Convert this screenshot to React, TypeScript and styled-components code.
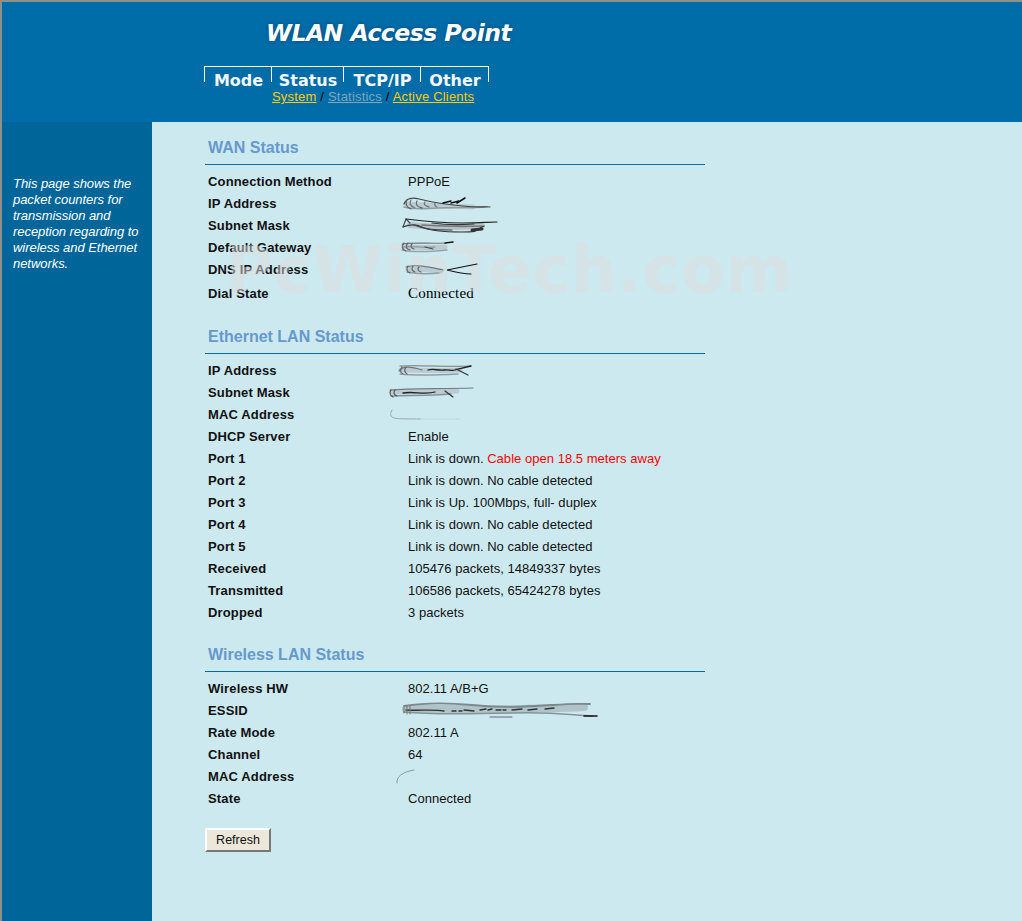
import React from 'react';
import styled, { createGlobalStyle } from 'styled-components';

const GlobalStyle = createGlobalStyle`
    html, body {
        margin: 0;
        padding: 0;
        background: #cce9f0;
    }
    body {
        font-family: "Liberation Sans", Arial, sans-serif;
    }
`;

type Stroke = { d: string; w?: number; c?: string };

// the blurred-out addresses are scribbles in the screenshot, x is offset from the value column
const Smudge = ({ w, h, x, y = 0, strokes }: { w: number; h: number; x: number; y?: number; strokes: Stroke[] }) => (
    <SmudgeSvg width={w} height={h} viewBox={`0 0 ${w} ${h}`} $x={x} $y={y}>
        {strokes.map((s, i) => (
            <path key={i} d={s.d} fill="none" stroke={s.c ?? '#333'} strokeWidth={s.w ?? 1} strokeLinecap="round" />
        ))}
    </SmudgeSvg>
);

const wanIp: Stroke[] = [
    { d: 'M3 8C16 9 40 10 70 11', c: '#b8ccd2', w: 5 },
    { d: 'M1 11C8 13 20 13 35 12S62 12 84 11', c: '#8f9ca0', w: 1.6 },
    { d: 'M1 8C3 3 8 1 16 3S36 8 60 10S78 10 87 11', c: '#444', w: 1.2 },
    { d: 'M4 4C2 7 3 11 8 13', c: '#666', w: 1.3 },
    { d: 'M8 4C6 7 7 10 12 12', c: '#777', w: 1.3 },
    { d: 'M14 5C12 8 14 11 19 12', c: '#666', w: 1.3 },
    { d: 'M22 6C20 8 22 10 26 11', c: '#777', w: 1.3 },
    { d: 'M32 7C31 9 32 10 34 11', c: '#777', w: 1.3 },
    { d: 'M40 7L48 5M48 7L56 5M54 7L62 2', c: '#111', w: 1.5 },
];
const wanMask: Stroke[] = [
    { d: 'M8 7C30 9 56 10 80 8', c: '#b4c6cc', w: 6 },
    { d: 'M20 7C36 8 56 9 80 8', c: '#777', w: 1.6 },
    { d: 'M1 9L4 1L8 5', c: '#444', w: 1.2 },
    { d: 'M4 1C20 3 40 5 60 5S85 4 95 4', c: '#222', w: 1.2 },
    { d: 'M1 9C8 6 14 6 20 9S40 14 60 14S72 12 82 8', c: '#333', w: 1.2 },
    { d: 'M12 7C24 12 34 12 50 12', c: '#444', w: 1.2 },
    { d: 'M70 12L80 11', c: '#333', w: 3 },
    { d: 'M30 5C44 7 58 7 72 6', c: '#333', w: 1.2 },
];
const wanGateway: Stroke[] = [
    { d: 'M3 5C14 5 30 6 44 5', c: '#b8ccd2', w: 5 },
    { d: 'M1 8C10 10 26 10 46 8', c: '#98a4a8', w: 1.5 },
    { d: 'M1 2C14 0 30 2 44 1', c: '#777', w: 1.2 },
    { d: 'M2 5C12 4 26 6 34 5', c: '#888' },
    { d: 'M44 1L52 0', c: '#111', w: 1.5 },
    { d: 'M3 1C0 4 1 8 5 9M7 1C4 4 5 7 9 8M11 2C9 4 10 6 13 7', c: '#666', w: 1.2 },
    { d: 'M24 5L32 7', c: '#444' },
];
const wanDns: Stroke[] = [
    { d: 'M3 5C12 5 26 6 36 7', c: '#b8ccd2', w: 5 },
    { d: 'M2 8C12 10 24 10 34 9', c: '#929ea2', w: 1.5 },
    { d: 'M1 3C12 0 24 3 38 6', c: '#777', w: 1.2 },
    { d: 'M72 0C62 2 52 4 42 6C50 8 58 10 66 10', c: '#111', w: 1.2 },
    { d: 'M3 2C1 5 2 8 5 9M8 2C6 5 7 7 10 8M14 3C12 5 13 7 16 8', c: '#666', w: 1.2 },
];
const lanIp: Stroke[] = [
    { d: 'M3 5C20 5 40 6 62 5', c: '#b8ccd2', w: 5 },
    { d: 'M2 9C20 11 40 10 60 9', c: '#929ea2', w: 1.5 },
    { d: 'M2 1C20 0 50 2 73 1', c: '#777', w: 1.2 },
    { d: 'M1 6C4 1 12 1 24 5', c: '#777', w: 1.2 },
    { d: 'M30 5C36 3 40 6 46 5S54 7 60 4L73 1', c: '#222', w: 1.3 },
    { d: 'M58 4L70 10', c: '#333', w: 1.2 },
    { d: 'M4 2C2 5 2 8 5 9M8 2C6 5 6 7 9 9', c: '#666', w: 1.2 },
];
const lanMask: Stroke[] = [
    { d: 'M3 5C20 5 46 5 68 4', c: '#b8ccd2', w: 5 },
    { d: 'M2 9C20 8 40 9 62 7', c: '#86929a', w: 1.5 },
    { d: 'M1 3C20 1 50 2 84 1', c: '#778', w: 1.2 },
    { d: 'M14 6C24 4 36 8 46 5', c: '#222', w: 1.3 },
    { d: 'M56 4L64 10', c: '#333', w: 1.2 },
    { d: 'M2 3C0 6 1 8 4 10M6 3C4 6 5 8 8 9', c: '#555', w: 1.2 },
];
const lanMac: Stroke[] = [
    { d: 'M30 10H70', c: '#c0d4da' },
    { d: 'M2 1C0 4 0 8 4 9S20 10 30 10', c: '#9aa8ae' },
];
const essid: Stroke[] = [
    { d: 'M4 7C40 6 80 8 120 7S165 6 182 5', c: '#afc3c9', w: 8 },
    { d: 'M2 10C30 13 70 12 110 11S160 12 190 14', c: '#86949a', w: 1.6 },
    { d: 'M2 4C20 1 40 0 70 3S120 5 150 3S175 2 188 2', c: '#7c888c', w: 1.8 },
    { d: 'M4 8C20 9 30 7 42 9M50 9H54M57 9H60M62 8L72 9M78 8L84 7M86 8L90 7M94 8H99M101 8H104M110 8L120 7M126 8L135 7M143 7L152 6', c: '#333', w: 1.3 },
    { d: 'M88 15H110', c: '#667' },
    { d: 'M182 14H195', c: '#111', w: 1.5 },
    { d: 'M2 5V11M5 4V12M8 4V12', c: '#777' },
];
const wlanMac: Stroke[] = [{ d: 'M1 14C0 8 6 3 18 1', c: '#8c9aa0' }];

const tabs: [string, number][] = [
    ['Mode', 67],
    ['Status', 72],
    ['TCP/IP', 77],
    ['Other', 68],
];

export default function App() {
    return (
        <Page>
            <GlobalStyle />
            <Header>
                <Title>WLAN Access Point</Title>
                <Tabs>
                    {tabs.map(([label, w]) => (
                        <Tab key={label} $w={w}>{label}</Tab>
                    ))}
                </Tabs>
                <SubNav>
                    <SubLink href="#">System</SubLink> / <SubLink href="#" $muted>Statistics</SubLink> /{' '}
                    <SubLink href="#">Active Clients</SubLink>
                </SubNav>
            </Header>
            <Body>
                <Sidebar>
                    This page shows the packet counters for transmission and reception regarding to wireless and Ethernet networks.
                </Sidebar>
                <Main>
                    <Watermark>PcWinTech.com</Watermark>
                    <Section $gap={20}>
                        <SectionTitle>WAN Status</SectionTitle>
                        <Row><Label>Connection Method</Label><Value>PPPoE</Value></Row>
                        <Row><Label>IP Address</Label><Value><Smudge w={90} h={15} x={-5} y={1} strokes={wanIp} /></Value></Row>
                        <Row><Label>Subnet Mask</Label><Value><Smudge w={96} h={15} x={-6} y={0} strokes={wanMask} /></Value></Row>
                        <Row><Label>Default Gateway</Label><Value><Smudge w={54} h={11} x={-7} y={0} strokes={wanGateway} /></Value></Row>
                        <Row><Label>DNS IP Address</Label><Value><Smudge w={72} h={11} x={-3} y={0} strokes={wanDns} /></Value></Row>
                        <Row $tall><Label>Dial State</Label><SerifValue>Connected</SerifValue></Row>
                    </Section>
                    <Section>
                        <SectionTitle>Ethernet LAN Status</SectionTitle>
                        <Row><Label>IP Address</Label><Value><Smudge w={74} h={11} x={-10} strokes={lanIp} /></Value></Row>
                        <Row><Label>Subnet Mask</Label><Value><Smudge w={85} h={11} x={-19} strokes={lanMask} /></Value></Row>
                        <Row><Label>MAC Address</Label><Value><Smudge w={70} h={11} x={-18} strokes={lanMac} /></Value></Row>
                        <Row><Label>DHCP Server</Label><Value>Enable</Value></Row>
                        <Row><Label>Port 1</Label><Value>Link is down. <Alert>Cable open 18.5 meters away</Alert></Value></Row>
                        <Row><Label>Port 2</Label><Value>Link is down. No cable detected</Value></Row>
                        <Row><Label>Port 3</Label><Value>Link is Up. 100Mbps, full- duplex</Value></Row>
                        <Row><Label>Port 4</Label><Value>Link is down. No cable detected</Value></Row>
                        <Row><Label>Port 5</Label><Value>Link is down. No cable detected</Value></Row>
                        <Row><Label>Received</Label><Value>105476 packets, 14849337 bytes</Value></Row>
                        <Row><Label>Transmitted</Label><Value>106586 packets, 65424278 bytes</Value></Row>
                        <Row><Label>Dropped</Label><Value>3 packets</Value></Row>
                    </Section>
                    <Section>
                        <SectionTitle>Wireless LAN Status</SectionTitle>
                        <Row><Label>Wireless HW</Label><Value>802.11 A/B+G</Value></Row>
                        <Row><Label>ESSID</Label><Value><Smudge w={196} h={16} x={-6} strokes={essid} /></Value></Row>
                        <Row><Label>Rate Mode</Label><Value>802.11 A</Value></Row>
                        <Row><Label>Channel</Label><Value>64</Value></Row>
                        <Row><Label>MAC Address</Label><Value><Smudge w={20} h={15} x={-12} y={1} strokes={wlanMac} /></Value></Row>
                        <Row><Label>State</Label><Value>Connected</Value></Row>
                    </Section>
                    <RefreshButton type="button">Refresh</RefreshButton>
                </Main>
            </Body>
        </Page>
    );
}

const Page = styled.div`
    width: 1022px;
    height: 921px;
    overflow: hidden;
    display: flex;
    flex-direction: column;
    border-top: 2px solid #8f8f8b;
    border-left: 2px solid #8f8f8b;
    box-sizing: border-box;
`;

const Header = styled.header`
    height: 120px;
    flex: none;
    box-sizing: border-box;
    background: #006ca8;
    padding: 18px 0 0 202px;
`;

const Title = styled.h1`
    margin: 0 0 0 62px;
    height: 46px;
    font-family: "DejaVu Sans", sans-serif;
    font-size: 23.5px;
    letter-spacing: -0.5px;
    line-height: 26px;
    font-weight: bold;
    font-style: italic;
    color: #fff;
    text-shadow: 0 0 4px #004a7a;
`;

const Tabs = styled.nav`
    display: flex;
    height: 16px;
    width: max-content;
    border-right: 1px solid #fff;
`;

const Tab = styled.div<{ $w: number }>`
    width: ${({ $w }) => $w}px;
    box-sizing: border-box;
    padding-left: 1px;
    border-top: 1px solid #fff;
    border-left: 1px solid #fff;
    font-family: "DejaVu Sans", sans-serif;
    font-size: 16px;
    font-weight: bold;
    line-height: 28px;
    color: #f4f8fb;
    text-align: center;
    white-space: nowrap;
`;

const SubNav = styled.div`
    margin: 7px 0 0 68px;
    font-size: 13px;
    line-height: 15px;
    letter-spacing: 0.2px;
    color: #000;
`;

const SubLink = styled.a<{ $muted?: boolean }>`
    color: ${({ $muted }) => ($muted ? '#7fa6bd' : '#ffcc00')};
`;

const Body = styled.div`
    flex: 1;
    display: flex;
    min-height: 0;
`;

const Sidebar = styled.aside`
    width: 150px;
    flex: none;
    box-sizing: border-box;
    background: #006699;
    padding: 54px 10px 0 11px;
    font-size: 13px;
    line-height: 16px;
    font-style: italic;
    letter-spacing: -0.05px;
    color: #fff;
`;

const Main = styled.main`
    position: relative;
    flex: 1;
    background: #cce9f0;
    padding: 13px 0 0 53px;
`;

const Watermark = styled.div`
    position: absolute;
    left: 74px;
    top: 113px;
    font-family: "DejaVu Sans", sans-serif;
    font-size: 64px;
    line-height: 70px;
    font-weight: bold;
    letter-spacing: 0.7px;
    color: rgba(221, 221, 221, 0.5);
    white-space: nowrap;
    pointer-events: none;
`;

const Section = styled.section<{ $gap?: number }>`
    width: 500px;
    margin-bottom: ${({ $gap }) => $gap ?? 19}px;
`;

const SectionTitle = styled.h2`
    margin: 0 0 5px;
    padding: 2px 0 6px 3px;
    height: 21px;
    font-size: 16px;
    line-height: 21px;
    font-weight: bold;
    color: #6699cc;
    border-bottom: 1px solid #006ca8;
`;

const Row = styled.div<{ $tall?: boolean }>`
    display: grid;
    grid-template-columns: 200px 1fr;
    height: 22px;
    margin-top: ${({ $tall }) => ($tall ? 2 : 0)}px;
    align-items: center;
    padding-left: 3px;
    font-size: 13px;
`;

const Label = styled.div`
    font-weight: bold;
    color: #111;
    letter-spacing: 0.15px;
    white-space: nowrap;
`;

const Value = styled.div`
    color: #111;
    letter-spacing: 0.03px;
    white-space: nowrap;
`;

const SerifValue = styled.div`
    font-family: "Liberation Serif", serif;
    font-size: 15px;
    letter-spacing: 0.2px;
    color: #000;
    white-space: nowrap;
`;

const Alert = styled.span`
    color: #ff0000;
`;

const SmudgeSvg = styled.svg<{ $x: number; $y: number }>`
    display: block;
    margin-left: ${({ $x }) => $x}px;
    margin-top: ${({ $y }) => $y}px;
    overflow: visible;
    filter: blur(0.4px);
`;

const RefreshButton = styled.button`
    display: block;
    margin: 0;
    width: 66px;
    height: 24px;
    padding: 0;
    background: #ece8d9;
    border: 2px solid;
    border-color: #fff #777 #777 #fff;
    font-family: "Liberation Sans", sans-serif;
    font-size: 12.5px;
    color: #111;
`;
